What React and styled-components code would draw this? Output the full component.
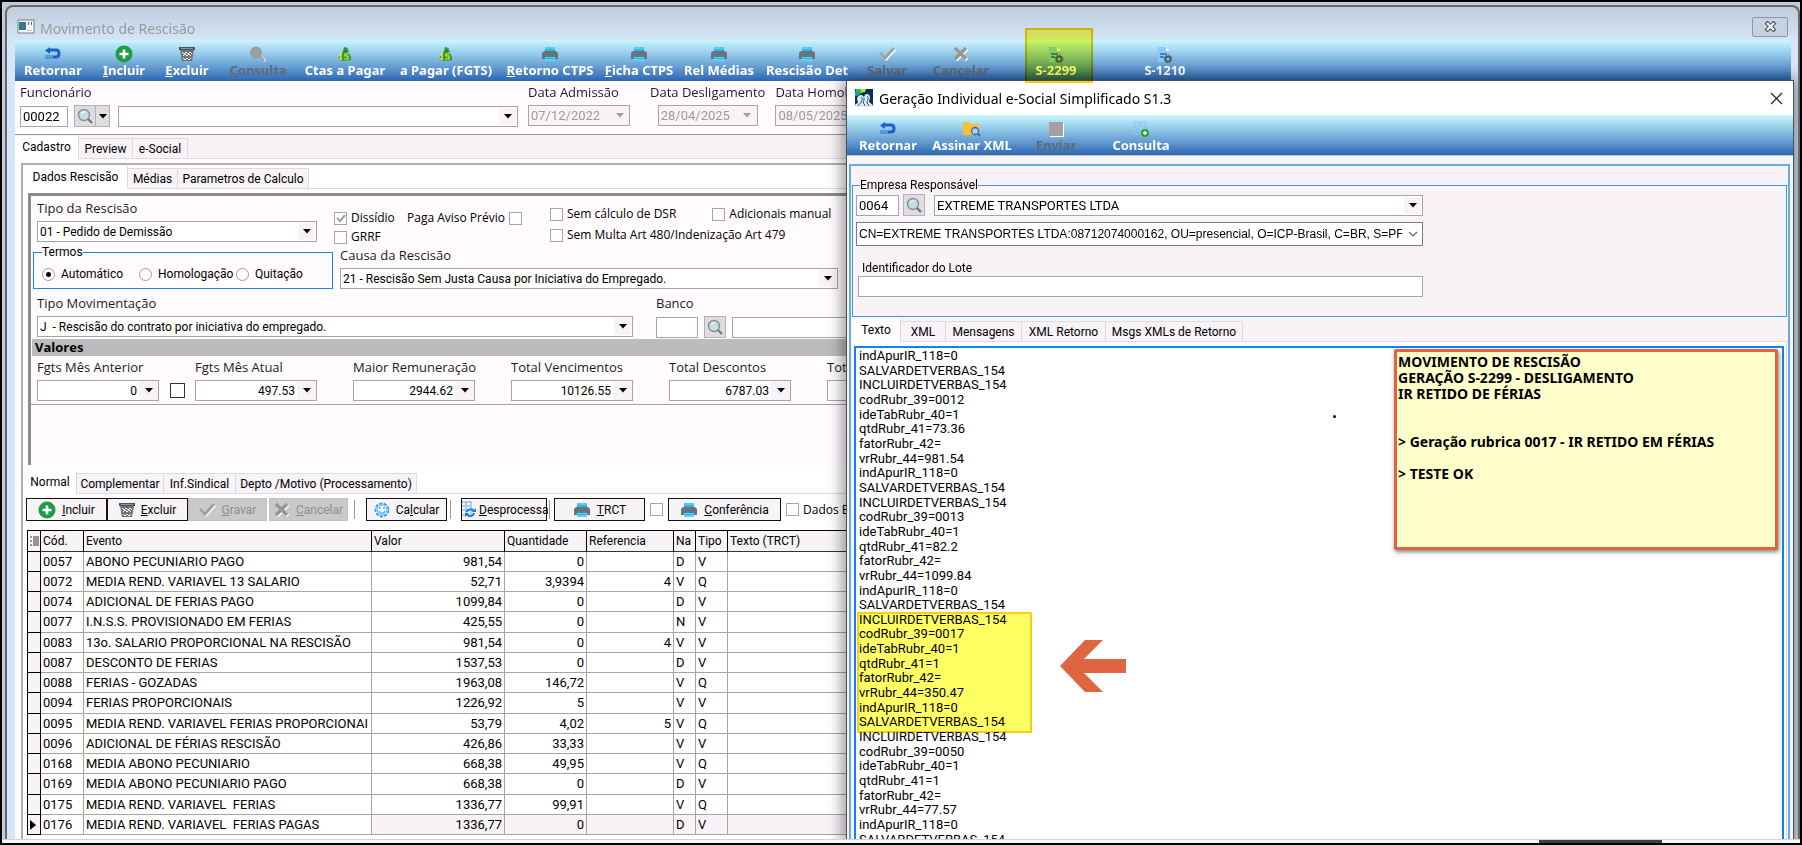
import React, { useId } from 'react';
import styled, { createGlobalStyle } from 'styled-components';

const gridFont = 'Roboto, "Liberation Sans", sans-serif';
const labelFont = '"Open Sans", "Noto Sans", sans-serif';
const boldFont = '"Noto Sans", "Open Sans", sans-serif';

const eventos = [
  ['0057', 'ABONO PECUNIARIO PAGO', '981,54', '0', '', 'D', 'V'],
  ['0072', 'MEDIA REND. VARIAVEL 13 SALARIO', '52,71', '3,9394', '4', 'V', 'Q'],
  ['0074', 'ADICIONAL DE FERIAS PAGO', '1099,84', '0', '', 'D', 'V'],
  ['0077', 'I.N.S.S. PROVISIONADO EM FERIAS', '425,55', '0', '', 'N', 'V'],
  ['0083', '13o. SALARIO PROPORCIONAL NA RESCISÃO', '981,54', '0', '4', 'V', 'V'],
  ['0087', 'DESCONTO DE FERIAS', '1537,53', '0', '', 'D', 'V'],
  ['0088', 'FERIAS - GOZADAS', '1963,08', '146,72', '', 'V', 'Q'],
  ['0094', 'FERIAS PROPORCIONAIS', '1226,92', '5', '', 'V', 'V'],
  ['0095', 'MEDIA REND. VARIAVEL FERIAS PROPORCIONAI', '53,79', '4,02', '5', 'V', 'Q'],
  ['0096', 'ADICIONAL DE FÉRIAS RESCISÃO', '426,86', '33,33', '', 'V', 'V'],
  ['0168', 'MEDIA ABONO PECUNIARIO', '668,38', '49,95', '', 'V', 'Q'],
  ['0169', 'MEDIA ABONO PECUNIARIO PAGO', '668,38', '0', '', 'D', 'V'],
  ['0175', 'MEDIA REND. VARIAVEL  FERIAS', '1336,77', '99,91', '', 'V', 'Q'],
  ['0176', 'MEDIA REND. VARIAVEL  FERIAS PAGAS', '1336,77', '0', '', 'D', 'V'],
];

const rubrica = (cod, qtd, valor) => [
  'INCLUIRDETVERBAS_154',
  `codRubr_39=${cod}`,
  'ideTabRubr_40=1',
  `qtdRubr_41=${qtd}`,
  'fatorRubr_42=',
  `vrRubr_44=${valor}`,
  'indApurIR_118=0',
  'SALVARDETVERBAS_154',
];

const loteTexto = [
  'indApurIR_118=0',
  'SALVARDETVERBAS_154',
  ...rubrica('0012', '73.36', '981.54'),
  ...rubrica('0013', '82.2', '1099.84'),
  ...rubrica('0017', '1', '350.47'),
  ...rubrica('0050', '1', '77.57'),
].join('\n');

const observacao = `MOVIMENTO DE RESCISÃO
GERAÇÃO S-2299 - DESLIGAMENTO
IR RETIDO DE FÉRIAS


> Geração rubrica 0017 - IR RETIDO EM FÉRIAS

> TESTE OK`;

/* ---------- icons ---------- */

const ReturnIcon = () => (
  <svg width="18" height="16" viewBox="0 0 18 16">
    <path d="M5 4h7c4 0 4 7 0 7H9" fill="none" stroke="#1464c8" strokeWidth="3" />
    <path d="M1 4.500L6 1v7z" fill="#1464c8" />
    <path d="M2 9v4M4 9v4M6 9v4M8 9v4" stroke="#2a6fd0" strokeWidth="1" />
  </svg>
);

const AddIcon = () => (
  <svg width="18" height="18" viewBox="0 0 18 18">
    <circle cx="9" cy="9" r="8.500" fill="#1f9a45" />
    <path d="M9 4.500v9M4.500 9h9" stroke="#fff" strokeWidth="2.600" />
  </svg>
);

const TrashIcon = () => (
  <svg width="16" height="16" viewBox="0 0 16 16">
    <path d="M0 1h16v3H0z" fill="#4c5257" />
    <path d="M2 2h12v1H2z" fill="#8d959a" />
    <path d="M1 4h14l-2 11H3z" fill="#6d757b" />
    <path d="M3 6l2 2 2-2 2 2 2-2 2 2M4 10l2-2 2 2 2-2 2 2M4 12l2 2 2-2 2 2 2-2" fill="none" stroke="#f0f4f6" strokeWidth="1" />
  </svg>
);

const BlurredLensIcon = () => (
  <svg width="18" height="17" viewBox="0 0 18 17">
    <path d="M11 11l5 4" stroke="#fff" strokeWidth="3" />
    <circle cx="7" cy="6.500" r="6" fill="#9b9ea3" />
    <path d="M9 9l6 6" stroke="#9b9ea3" strokeWidth="3" />
  </svg>
);

const MoneyIcon = () => (
  <svg width="16" height="16" viewBox="0 0 16 16">
    <path d="M7 1l4 1-1 4c3 2 5 5 4 8-1 1-10 1-12 0-1-3 1-6 4-8z" fill="#2f9b3a" />
    <path d="M6 5h6" stroke="#186a22" strokeWidth="1" />
    <path d="M2 9l2-1v5M2 13h3" stroke="#f1e33b" strokeWidth="1.500" fill="none" />
    <path d="M11 8H8v2h3v3H7" stroke="#f1e33b" strokeWidth="1.200" fill="none" />
  </svg>
);

const PrinterIcon = () => (
  <svg width="18" height="14" viewBox="0 0 18 14">
    <path d="M4 0h10v5H4z" fill="#52cdf2" />
    <path d="M3 4h12l2 2v6H1V6z" fill="#667380" />
    <path d="M4 2h10v2H4z" fill="#37b4e0" />
    <path d="M4 10h10v4H4z" fill="#49dcfa" />
    <path d="M5 11h8v1H5z" fill="#2fa9d8" />
  </svg>
);

const CheckIcon = () => (
  <svg width="17" height="14" viewBox="0 0 17 14">
    <path d="M2 7l5 5 9-10" fill="none" stroke="#fff" strokeWidth="3" />
    <path d="M1 6l5 5 9-10" fill="none" stroke="#a2a0a3" strokeWidth="3" />
  </svg>
);

const CrossIcon = () => (
  <svg width="16" height="16" viewBox="0 0 16 16">
    <path d="M3 3l11 11M14 3L3 14" stroke="#fff" strokeWidth="3.500" />
    <path d="M2 2l11 11M13 2L2 13" stroke="#979598" strokeWidth="3.500" />
  </svg>
);

const DocGearIcon = () => (
  <svg width="16" height="17" viewBox="0 0 16 17">
    <path d="M1 1h8l4 4v11H1z" fill="#8cc6fb" />
    <path d="M9 1l4 4H9z" fill="#f2f8ff" />
    <path d="M3 8h7M3 11h4" stroke="#1a72c4" strokeWidth="1.500" />
    <circle cx="11" cy="13" r="2.500" fill="none" stroke="#4c5a66" strokeWidth="2" />
    <circle cx="11" cy="13" r="4" fill="none" stroke="#4c5a66" strokeWidth="1" strokeDasharray="1.500 1.600" />
  </svg>
);

const FolderSearchIcon = () => (
  <svg width="18" height="16" viewBox="0 0 18 16">
    <path d="M0 1h6l2 2h8v11H0z" fill="#fbc02d" />
    <circle cx="12" cy="10" r="3.500" fill="#9fd3f7" stroke="#2e6ea6" strokeWidth="1.300" />
    <path d="M14.500 12.500L17 15" stroke="#2e5c86" strokeWidth="1.600" />
  </svg>
);

const StopIcon = () => (
  <svg width="15" height="15" viewBox="0 0 15 15">
    <path d="M1 1h14v14H1z" fill="#fff" />
    <path d="M0 0h14v14H0z" fill="#a3a1a5" />
  </svg>
);

const GridAddIcon = () => (
  <svg width="18" height="16" viewBox="0 0 18 16">
    <path d="M2 1h5v5H2zM9 1h5v5H9zM2 8h5v5H2z" fill="none" stroke="#86c8fa" strokeWidth="1.200" />
    <circle cx="13" cy="12" r="4" fill="#3c9b41" />
    <path d="M13 10v4M11 12h4" stroke="#fff" strokeWidth="1.300" />
  </svg>
);

const LensIcon = () => (
  <svg width="17" height="17" viewBox="0 0 17 17">
    <circle cx="7" cy="7" r="5.500" fill="#c9dbe2" stroke="#7f9099" strokeWidth="1.400" />
    <path d="M4 6c1-2 3-2 4-2" fill="none" stroke="#fff" strokeWidth="1" />
    <path d="M11 11l4 4" stroke="#6b7a82" strokeWidth="2.400" />
  </svg>
);

const FaceGearIcon = () => (
  <svg width="16" height="16" viewBox="0 0 16 16">
    <circle cx="8" cy="8" r="6.500" fill="none" stroke="#2f9be8" strokeWidth="1.800" strokeDasharray="3.200 1.300" />
    <circle cx="8" cy="8" r="5" fill="#eef7fd" stroke="#58b2ef" strokeWidth="1" />
    <path d="M6 5v2M10 5v2M5 9c1 3 5 3 6 0" fill="none" stroke="#2f9be8" strokeWidth="1.200" />
  </svg>
);

const TableRefreshIcon = () => (
  <svg width="14" height="17" viewBox="0 0 14 17">
    <path d="M0 1h9v13H0M0 5h9M0 9h9M4 1v13" fill="none" stroke="#8fc5f2" strokeWidth="1.500" />
    <path d="M5 11c0-3 6-4 7 0M12 12c-1 4-6 4-7 1" fill="none" stroke="#1f7fd6" strokeWidth="2" />
    <path d="M10 11h4V7zM7 12H3v4z" fill="#1f7fd6" />
  </svg>
);

const FormIcon = () => (
  <svg width="18" height="15" viewBox="0 0 18 15">
    <path d="M1 1h16v13H1z" fill="#fbfbfb" stroke="#6e7d8c" strokeWidth="1" />
    <path d="M2 3h6v8H2z" fill="#2f7d78" />
    <path d="M6 3h3v8H6z" fill="#3f6fb0" />
    <path d="M11 3h1v3h-1zM14 3h1v3h-1z" fill="#59636c" />
    <path d="M10 11h5v1h-5z" fill="#b8bec4" />
  </svg>
);

const PeopleIcon = () => (
  <svg width="18" height="18" viewBox="0 0 18 18">
    <path d="M0 0h18v18H0z" fill="#0d2f4e" />
    <path d="M1 0h7l1 3-4 2-3 2-2-1z" fill="#37c13c" />
    <path d="M6 0h5l-1 3H6z" fill="#b8e04a" />
    <path d="M0 3l4-1v2L0 8z" fill="#1b8fe0" />
    <path d="M0 17c0-3 3-2 3-4-2-4 0-7 3-7 2 0 3 2 3 3 0-2 1-4 3-4 3 0 4 4 2 7 0 2 3 2 4 5v1H0z" fill="#dfecf5" />
    <path d="M9 9c0 2 0 3-1 4 0 2 2 2 2 4M6 8c2 1 1 3 0 5 0 1-2 2-3 4M12 7c2 2 1 4 0 6 0 2 2 2 2 4" fill="none" stroke="#1d4a70" strokeWidth="1" />
  </svg>
);

const CaretIcon = ({ color = '#000' }) => (
  <svg width="8" height="5" viewBox="0 0 8 5">
    <path d="M0 0h8L4 4.500z" fill={color} />
  </svg>
);

const ChevronIcon = () => (
  <svg width="10" height="6" viewBox="0 0 10 6">
    <path d="M1 1l4 4 4-4" fill="none" stroke="#666" strokeWidth="1.200" />
  </svg>
);

const RowListIcon = () => (
  <svg width="9" height="11" viewBox="0 0 9 11">
    <path d="M3 1h6M3 3h6M3 5h6M3 7h6M3 9h6M0 1h2M0 5h2M0 9h2" stroke="#333" strokeWidth="1" />
  </svg>
);

const CurrentRowIcon = () => (
  <svg width="7" height="10" viewBox="0 0 7 10">
    <path d="M0 0l6 5-6 5z" fill="#000" />
  </svg>
);

/* ---------- parts ---------- */

// first letter (or the one at `at`) underlined as keyboard shortcut
const Hot = ({ text, at = 0 }) => (
  <span>
    {text.slice(0, at)}
    <u>{text[at]}</u>
    {text.slice(at + 1)}
  </span>
);

const ToolButton = ({ width, icon: Icon, disabled, children }) => (
  <StyledToolButton $width={width} disabled={disabled} type="button">
    <i><Icon /></i>
    <span>{children}</span>
  </StyledToolButton>
);

const Combo = ({ id, label, width, value, chevron, caps }) => (
  <ComboBox $width={width} $chevron={chevron} $caps={caps}>
    <select id={id} aria-label={label} defaultValue={value}>
      <option value={value}>{value}</option>
    </select>
    <ComboArrow $plain={chevron}>{chevron ? <ChevronIcon /> : <CaretIcon />}</ComboArrow>
  </ComboBox>
);

const Field = ({ label, children, align }) => {
  const id = useId();
  return (
    <StyledField $align={align}>
      <Label htmlFor={id}>{label}</Label>
      {children(id)}
    </StyledField>
  );
};

const DropInput = ({ id, width, value, disabled, right }) => (
  <DropBox $width={width} $disabled={disabled} $right={right}>
    <input id={id} defaultValue={value} disabled={disabled} />
    <DropButton type="button" aria-label="Abrir" disabled={disabled}>
      <CaretIcon color={disabled ? '#a0a0a0' : '#000'} />
    </DropButton>
  </DropBox>
);

const Check = ({ label, before, ...rest }) => (
  <CheckLabel>
    {before && label}
    <CheckBox type="checkbox" {...rest} />
    {!before && label}
  </CheckLabel>
);

const Tabs = ({ label, items }) => (
  <TabBar role="tablist" aria-label={label}>
    {items.map(([name, width], i) => (
      <Tab key={name} type="button" role="tab" aria-selected={i === 0} $width={width}>{name}</Tab>
    ))}
  </TabBar>
);

const valores = [
  ['Fgts Mês Anterior', '0'],
  ['Fgts Mês Atual', '497.53'],
  ['Maior Remuneração', '2944.62'],
  ['Total Vencimentos', '10126.55'],
  ['Total Descontos', '6787.03'],
  ['Total Líquido', ''],
];

const FuncionarioBar = () => (
  <FilterRow>
    <Field label="Funcionário">
      {id => (
        <Inline>
          <TextInput id={id} $width={48} defaultValue="00022" />
          <Split>
            <LensButton type="button" aria-label="Pesquisar funcionário"><LensIcon /></LensButton>
            <SplitCaret type="button" aria-label="Opções de pesquisa"><CaretIcon /></SplitCaret>
          </Split>
          <Combo label="Nome do funcionário" width={400} value="" />
        </Inline>
      )}
    </Field>
    <Field label="Data Admissão">{id => <DropInput id={id} width={102} value="07/12/2022" disabled />}</Field>
    <Field label="Data Desligamento" align="center">
      {id => <DropInput id={id} width={100} value="28/04/2025" disabled />}
    </Field>
    <Field label="Data Homologação">{id => <DropInput id={id} width={102} value="08/05/2025" disabled />}</Field>
  </FilterRow>
);

const RescisaoForm = () => (
  <Inset>
    <FormTop>
      <LeftColumn>
        <Field label="Tipo da Rescisão">
          {id => <Combo id={id} width={280} value="01 - Pedido de Demissão" />}
        </Field>
        <Termos>
          <legend>Termos</legend>
          <RadioLabel $width={97}><input type="radio" name="termos" defaultChecked />Automático</RadioLabel>
          <RadioLabel $width={97}><input type="radio" name="termos" />Homologação</RadioLabel>
          <RadioLabel><input type="radio" name="termos" />Quitação</RadioLabel>
        </Termos>
      </LeftColumn>
      <RightColumn>
        <Checks>
          <CheckColumn $width={73}>
            <Check label="Dissídio" defaultChecked disabled />
            <Check label="GRRF" />
          </CheckColumn>
          <CheckColumn $width={143}><Check label="Paga Aviso Prévio" before /></CheckColumn>
          <CheckColumn $tall>
            <CheckLine>
              <Check label="Sem cálculo de DSR" />
              <Check label="Adicionais manual" />
            </CheckLine>
            <Check label="Sem Multa Art 480/Indenização Art 479" />
          </CheckColumn>
        </Checks>
        <Field label="Causa da Rescisão">
          {id => <Combo id={id} width={498} value="21 - Rescisão Sem Justa Causa por Iniciativa do Empregado." />}
        </Field>
      </RightColumn>
    </FormTop>
    <MovimentoRow>
      <Field label="Tipo Movimentação">
        {id => <Combo id={id} width={596} value={'J\u00a0 - Rescisão do contrato por iniciativa do empregado.'} />}
      </Field>
      <Field label="Banco">
        {id => (
          <Inline>
            <TextInput id={id} $width={42} />
            <LensButton type="button" aria-label="Pesquisar banco"><LensIcon /></LensButton>
            <TextInput aria-label="Nome do banco" $width={300} />
          </Inline>
        )}
      </Field>
    </MovimentoRow>
    <SectionBar>Valores</SectionBar>
    <ValoresGrid>
      {valores.map(([label, value], i) => (
        <Field key={label} label={label}>
          {id => (
            <Inline $gap={11}>
              <DropInput id={id} width={122} value={value} right />
              {i === 0 && <BigCheck type="checkbox" aria-label="Alterar Fgts Mês Anterior" />}
            </Inline>
          )}
        </Field>
      ))}
    </ValoresGrid>
  </Inset>
);

const EventosToolbar = () => (
  <ActionRow>
    <ActionButton type="button" $width={81}><AddIcon /><Hot text="Incluir" /></ActionButton>
    <ActionButton type="button" $width={81}><TrashIcon /><Hot text="Excluir" /></ActionButton>
    <ActionButton type="button" $width={79} disabled><CheckIcon /><Hot text="Gravar" /></ActionButton>
    <ActionButton type="button" $width={79} disabled><CrossIcon /><Hot text="Cancelar" /></ActionButton>
    <Divider $before={4} $after={11} />
    <ActionButton type="button" $width={81}><FaceGearIcon /><Hot text="Calcular" at={2} /></ActionButton>
    <Divider $before={3} $after={10} />
    <ActionButton type="button" $width={86} $tight><TableRefreshIcon /><Hot text="Desprocessa" /></ActionButton>
    <Divider $before={2} $after={4} />
    <ActionButton type="button" $width={91}><PrinterIcon /><Hot text="TRCT" /></ActionButton>
    <BoxSlot><CheckBox type="checkbox" aria-label="TRCT" /></BoxSlot>
    <ActionButton type="button" $width={113}><PrinterIcon /><Hot text="Conferência" /></ActionButton>
    <BoxSlot><Check label="Dados Empresa" /></BoxSlot>
  </ActionRow>
);

const EventosTable = () => (
  <Grid>
    <colgroup>
      {[13, 43, 288, 133, 82, 87, 22, 32].map((w, i) => <col key={i} width={w} />)}
      <col />
    </colgroup>
    <thead>
      <tr>
        <th aria-label="Linha atual"><RowListIcon /></th>
        <th>Cód.</th>
        <th>Evento</th>
        <th>Valor</th>
        <th>Quantidade</th>
        <th>Referencia</th>
        <th>Na</th>
        <th>Tipo</th>
        <th>Texto (TRCT)</th>
      </tr>
    </thead>
    <tbody>
      {eventos.map(([cod, evento, valor, qtd, ref, na, tipo], i) => (
        <Row key={cod} $current={i === eventos.length - 1}>
          <td>{i === eventos.length - 1 && <CurrentRowIcon />}</td>
          <td>{cod}</td>
          <td>{evento}</td>
          <Num>{valor}</Num>
          <Num>{qtd}</Num>
          <Num>{ref}</Num>
          <td>{na}</td>
          <td>{tipo}</td>
          <td />
        </Row>
      ))}
    </tbody>
  </Grid>
);

const ESocialDialog = () => (
  <Dialog role="dialog" aria-label="Geração Individual e-Social Simplificado S1.3">
    <DialogTitle>
      <PeopleIcon />
      <span>Geração Individual e-Social Simplificado S1.3</span>
      <DialogClose type="button" aria-label="Fechar">
        <svg width="13" height="13" viewBox="0 0 13 13">
          <path d="M1 1l11 11M12 1L1 12" stroke="#222" strokeWidth="1.200" />
        </svg>
      </DialogClose>
    </DialogTitle>
    <ToolBar>
      <ToolButton width={82} icon={ReturnIcon}>Retornar</ToolButton>
      <ToolButton width={86} icon={FolderSearchIcon}>Assinar XML</ToolButton>
      <ToolButton width={82} icon={StopIcon} disabled>Enviar</ToolButton>
      <ToolButton width={88} icon={GridAddIcon}>Consulta</ToolButton>
    </ToolBar>
    <DialogBody>
      <Frame>
        <Empresa>
          <legend>Empresa Responsável</legend>
          <Inline $gap={4}>
            <TextInput aria-label="Código da empresa" $width={43} defaultValue="0064" />
            <LensButton type="button" aria-label="Pesquisar empresa"><LensIcon /></LensButton>
            <EmpresaNome>
              <Combo label="Empresa Responsável" width={489} value="EXTREME TRANSPORTES LTDA" caps />
            </EmpresaNome>
          </Inline>
          <Combo
            label="Certificado"
            width={567}
            value="CN=EXTREME TRANSPORTES LTDA:08712074000162, OU=presencial, O=ICP-Brasil, C=BR, S=PF"
            chevron
          />
          <Lote>
            <label htmlFor="lote">Identificador do Lote</label>
            <TextInput id="lote" $width={565} />
          </Lote>
        </Empresa>
        <Tabs
          label="Resultado"
          items={[['Texto', 49], ['XML', 45], ['Mensagens', 76], ['XML Retorno', 84], ['Msgs XMLs de Retorno', 137]]}
        />
        <MemoPage>
          <Memo aria-label="Texto" spellCheck={false} defaultValue={loteTexto} />
          <Marker $left={5} $top={270} $width={175} $height={121} />
          <Arrow width="67" height="53" viewBox="0 0 67 53">
            <path d="M0 26L25 0h18L24 19h42v14H24l19 19H25z" fill="#dd6641" />
          </Arrow>
          <Dot />
          <Note>{observacao}</Note>
        </MemoPage>
      </Frame>
    </DialogBody>
  </Dialog>
);

const App = () => (
  <Desktop>
    <GlobalStyle />
    <Window>
      <TitleBar>
        <FormIcon />
        <h1>Movimento de Rescisão</h1>
        <CloseButton type="button" aria-label="Fechar">
          <svg width="13" height="11" viewBox="0 0 13 11">
            <path d="M2 1l9 9M11 1L2 10" stroke="#59606e" strokeWidth="4.400" />
            <path d="M3 2l7 7M10 2L3 9" stroke="#fff" strokeWidth="2" />
          </svg>
        </CloseButton>
      </TitleBar>
      <Client>
        <ToolBar>
          <ToolButton width={76} icon={ReturnIcon}>Retornar</ToolButton>
          <ToolButton width={66} icon={AddIcon}><Hot text="Incluir" /></ToolButton>
          <ToolButton width={60} icon={TrashIcon}><Hot text="Excluir" /></ToolButton>
          <ToolButton width={82} icon={BlurredLensIcon} disabled><Hot text="Consulta" /></ToolButton>
          <ToolButton width={92} icon={MoneyIcon}>Ctas a Pagar</ToolButton>
          <ToolButton width={110} icon={MoneyIcon}>a Pagar (FGTS)</ToolButton>
          <ToolButton width={98} icon={PrinterIcon}><Hot text="Retorno CTPS" /></ToolButton>
          <ToolButton width={80} icon={PrinterIcon}><Hot text="Ficha CTPS" /></ToolButton>
          <ToolButton width={80} icon={PrinterIcon}>Rel Médias</ToolButton>
          <ToolButton width={96} icon={PrinterIcon}>Rescisão Det</ToolButton>
          <ToolButton width={64} icon={CheckIcon} disabled><Hot text="Salvar" /></ToolButton>
          <ToolButton width={84} icon={CrossIcon} disabled>Cancelar</ToolButton>
          <ToolButton width={106} icon={DocGearIcon}>S-2299</ToolButton>
          <ToolButton width={112} icon={DocGearIcon}>S-1210</ToolButton>
        </ToolBar>
        <FuncionarioBar />
        <Tabs label="Rescisão" items={[['Cadastro', 64], ['Preview', 54], ['e-Social', 55]]} />
        <Page>
          <Tabs label="Cadastro" items={[['Dados Rescisão', 104], ['Médias', 50], ['Parametros de Calculo', 131]]} />
          <RescisaoForm />
          <Tabs
            label="Eventos"
            items={[['Normal', 53], ['Complementar', 87], ['Inf.Sindical', 72], ['Depto /Motivo (Processamento)', 181]]}
          />
          <EventosToolbar />
          <EventosTable />
        </Page>
      </Client>
      <ESocialDialog />
      <Marker $left={1018} $top={21} $width={68} $height={55} />
    </Window>
    <StatusStrip><span /></StatusStrip>
  </Desktop>
);

export default App;

// 'css in js' styling
const GlobalStyle = createGlobalStyle`
  * {
    box-sizing: border-box;
  }
  body {
    margin: 0;
    background: #000;
    font: 12px ${gridFont};
    color: #000;
  }
  button, input, select, textarea {
    font: inherit;
    color: inherit;
    margin: 0;
  }
  svg {
    display: block;
    flex: none;
  }
`;

const Desktop = styled.div`
  height: 100vh;
  display: flex;
  flex-direction: column;
  border: 2px solid #000;
  background: #c3cadb;
  overflow: hidden;
`;

const Window = styled.section`
  position: relative;
  isolation: isolate;
  flex: 1;
  min-height: 0;
  margin: 3px 0 0 3px;
  display: flex;
  flex-direction: column;
  border: 2px solid #68696d;
  border-bottom: 0;
  border-radius: 8px 8px 0 0;
  background: linear-gradient(#c0cddb, #d5e6f7 34px);
  overflow: hidden;
`;

const TitleBar = styled.header`
  flex: none;
  height: 33px;
  padding: 6px 10px 0;
  display: flex;
  align-items: center;
  gap: 5px;
  h1 {
    flex: 1;
    margin: 0;
    padding-top: 4px;
    font: 14px ${boldFont};
    color: #97999c;
  }
`;

const CloseButton = styled.button`
  width: 36px;
  height: 20px;
  padding: 0;
  display: flex;
  align-items: center;
  justify-content: center;
  border: 1px solid #8996b0;
  border-radius: 2px;
  background: #c4d2e4;
`;

const Client = styled.main`
  flex: 1;
  min-height: 0;
  margin: 0 7px 0 8px;
  display: flex;
  flex-direction: column;
  background: #fffbff;
  overflow: hidden;
`;

const ToolBar = styled.div`
  flex: none;
  height: 41px;
  display: flex;
  background: linear-gradient(#cbf6ff, #9bd0ec 30%, #659cd1 66%, #2c66b3);
  overflow: hidden;
`;

const StyledToolButton = styled.button`
  flex: none;
  width: ${props => props.$width}px;
  padding: 0;
  display: flex;
  flex-direction: column;
  align-items: center;
  border: 0;
  background: none;
  font: bold 13px/16px ${boldFont};
  white-space: nowrap;
  color: ${props => (props.disabled ? '#5f6a78' : '#fff')};
  i {
    height: 22px;
    padding-top: 6px;
    display: flex;
    align-items: center;
  }
`;

const FilterRow = styled.div`
  flex: none;
  height: 54px;
  padding: 3px 5px;
  display: flex;
  gap: 10px;
  border-bottom: 1px solid #9a989b;
  font-size: 13px;
  overflow: hidden;
`;

const StyledField = styled.div`
  flex: none;
  display: flex;
  flex-direction: column;
  align-items: ${props => props.$align || 'flex-start'};
  & + & {
    min-width: 112px;
  }
`;

const Label = styled.label`
  font: 13px/17px ${labelFont};
  height: 21px;
  white-space: nowrap;
  color: #1d1b22;
`;

const Inline = styled.div`
  display: flex;
  align-items: center;
  gap: ${props => props.$gap || 6}px;
`;

const TextInput = styled.input`
  flex: none;
  width: ${props => props.$width}px;
  height: 21px;
  padding: 0 2px;
  border: 1px solid #a6a4a8;
  background: #fff;
`;

const Split = styled.div`
  display: flex;
  margin-right: 2px;
`;

const LensButton = styled.button`
  flex: none;
  width: 22px;
  height: 22px;
  padding: 0;
  display: flex;
  align-items: center;
  justify-content: center;
  border: 1px solid #b3b1b5;
  background: #dfdde0;
`;

const SplitCaret = styled(LensButton)`
  width: 14px;
  border-left: 0;
`;

const ComboBox = styled.div`
  position: relative;
  flex: none;
  width: ${props => props.$width}px;
  height: ${props => (props.$chevron ? 24 : 21)}px;
  border: 1px solid ${props => (props.$chevron ? '#7b7a7d' : '#a6a4a8')};
  background: #fff;
  select {
    width: 100%;
    height: 100%;
    padding: 0 20px 0 2px;
    border: 0;
    appearance: none;
    background: none;
    font-family: ${props => (props.$chevron ? '"Liberation Sans", sans-serif' : 'inherit')};
    font-size: ${props => (props.$caps ? 13 : 12)}px;
  }
`;

const ComboArrow = styled.span`
  position: absolute;
  top: 1px;
  right: 1px;
  bottom: 1px;
  width: 17px;
  display: flex;
  align-items: center;
  justify-content: center;
  background: ${props => (props.$plain ? '#fff' : '#f7f3f7')};
  pointer-events: none;
`;

const DropBox = styled.div`
  flex: none;
  width: ${props => props.$width}px;
  height: 21px;
  display: flex;
  border: 1px solid #a6a4a8;
  background: ${props => (props.$disabled ? '#f7f3f7' : '#fff')};
  color: ${props => (props.$disabled ? '#9c9a9d' : '#000')};
  input {
    flex: 1;
    min-width: 0;
    padding: 0 2px;
    border: 0;
    background: none;
    text-align: ${props => (props.$right ? 'right' : 'left')};
  }
`;

const DropButton = styled.button`
  flex: none;
  width: 19px;
  padding: 0;
  display: flex;
  align-items: center;
  justify-content: center;
  border: 0;
  background: #f7f3f7;
`;

const TabBar = styled.div`
  flex: none;
  height: 24px;
  display: flex;
  align-items: flex-end;
  border-bottom: 1px solid #dedadf;
  background: #f7f3f7;
`;

const Tab = styled.button`
  flex: none;
  width: ${props => props.$width}px;
  height: 20px;
  padding: 0;
  border: 1px solid #dedadf;
  border-width: 1px 1px 0 0;
  background: #f7f3f7;
  white-space: nowrap;
  &[aria-selected='true'] {
    height: 23px;
    padding-bottom: 2px;
    margin-bottom: -1px;
    border-width: 0 1px 0 0;
    background: #fff;
  }
`;

const Page = styled.div`
  flex: 1;
  min-height: 0;
  margin: 4px 0 0 6px;
  padding-left: 1px;
  display: flex;
  flex-direction: column;
  border: 1px solid #b0aeb2;
  border-width: 2px 0 0 2px;
  background: #fff;
  & > ${TabBar} {
    background: #fff;
  }
`;

const Inset = styled.div`
  flex: none;
  height: 272px;
  margin: 4px 0 5px 4px;
  border: solid #8c8a8d;
  border-width: 3px 0 0 3px;
  background: #fffbff;
  overflow: hidden;
`;

const FormTop = styled.div`
  display: flex;
  height: 95px;
`;

const LeftColumn = styled.div`
  width: 303px;
  padding: 4px 0 0 2px;
  & > ${StyledField} {
    padding-left: 4px;
  }
`;

const Termos = styled.fieldset`
  width: 300px;
  height: 45px;
  margin: 2px 0 0;
  padding: 6px 8px 0;
  display: flex;
  border: 1px solid #1b86e0;
  legend {
    padding: 0;
    line-height: 16px;
  }
`;

const RadioLabel = styled.label`
  flex: none;
  width: ${props => (props.$width ? `${props.$width}px` : 'auto')};
  height: 16px;
  display: flex;
  align-items: center;
  gap: 6px;
  white-space: nowrap;
  input {
    flex: none;
    width: 13px;
    height: 13px;
    appearance: none;
    border: 1px solid #9c9a9d;
    border-radius: 50%;
    background: #fff;
  }
  input:checked {
    background: radial-gradient(#000 2px, #fff 3px);
  }
`;

const RightColumn = styled.div`
  flex: 1;
  & > ${StyledField} {
    padding-left: 6px;
  }
`;

const Checks = styled.div`
  height: 51px;
  padding-top: 10px;
  display: flex;
`;

const CheckColumn = styled.div`
  flex: none;
  width: ${props => (props.$width ? `${props.$width}px` : 'auto')};
  padding-top: ${props => (props.$tall ? 0 : 4)}px;
  display: flex;
  flex-direction: column;
  gap: ${props => (props.$tall ? 5 : 3)}px;
`;

const CheckLine = styled.div`
  display: flex;
  gap: 36px;
`;

const CheckLabel = styled.label`
  height: 16px;
  display: flex;
  align-items: center;
  gap: 4px;
  font: 12px/16px ${labelFont};
  white-space: nowrap;
`;

const CheckBox = styled.input`
  flex: none;
  width: 13px;
  height: 13px;
  appearance: none;
  border: 1px solid #a6a4a8;
  background: #fff;
  &:checked {
    background: #fff url("data:image/svg+xml,%3Csvg xmlns='http://www.w3.org/2000/svg' viewBox='0 0 11 11'%3E%3Cpath d='M2 5l3 3 5-6' fill='none' stroke='%23a0a0a0' stroke-width='2'/%3E%3C/svg%3E");
  }
`;

const MovimentoRow = styled.div`
  height: 48px;
  padding: 4px 0 0 6px;
  display: flex;
  gap: 23px;
`;

const SectionBar = styled.h2`
  height: 17px;
  margin: 0 0 0 1px;
  padding-left: 3px;
  background: #bcbcbc;
  font: bold 13px/17px ${labelFont};
`;

const ValoresGrid = styled.div`
  height: 49px;
  padding: 3px 0 0 6px;
  display: grid;
  grid-template-columns: repeat(6, 158px);
  border-bottom: 1px solid #a3a1a4;
`;

const BigCheck = styled(CheckBox)`
  width: 15px;
  height: 15px;
  border-color: #333;
`;

const ActionRow = styled.div`
  flex: none;
  height: 36px;
  padding: 4px 0 0 2px;
  display: flex;
  overflow: hidden;
`;

const ActionButton = styled.button`
  flex: none;
  width: ${props => props.$width}px;
  height: 23px;
  margin-right: ${props => (props.disabled ? 2 : 0)}px;
  padding: 0;
  display: flex;
  align-items: center;
  justify-content: ${props => (props.$tight ? 'flex-start' : 'center')};
  gap: ${props => (props.$tight ? 3 : 6)}px;
  border: ${props => (props.disabled ? '1px solid #c2c0c3' : '1px solid #111')};
  background: ${props => (props.disabled ? '#cac8cb' : '#f7f3f7')};
  color: ${props => (props.disabled ? '#8f8d90' : '#000')};
  white-space: nowrap;
`;

const Divider = styled.span`
  flex: none;
  width: 1px;
  height: 19px;
  margin: 2px ${props => props.$after}px 0 ${props => props.$before}px;
  background: #9c9a9d;
`;

const BoxSlot = styled.div`
  flex: none;
  height: 23px;
  padding: 0 5px;
  display: flex;
  align-items: center;
`;

const Grid = styled.table`
  flex: none;
  width: calc(100% - 3px);
  margin-left: 3px;
  table-layout: fixed;
  border-collapse: separate;
  border-spacing: 0;
  border-left: 1px solid #000;
  border-top: 1px solid #000;
  th, td {
    height: 20px;
    padding: 0 2px;
    border-right: 1px solid #a6a4a8;
    border-bottom: 1px solid #a6a4a8;
    font-size: 13px;
    font-weight: normal;
    line-height: 18px;
    text-align: left;
    white-space: pre;
    overflow: hidden;
  }
  th {
    height: 21px;
    font-size: 12px;
    border-right-color: #000;
    border-bottom-color: #333;
    background: #f7f3f7;
  }
  th:first-child, td:first-child {
    background: #f7f3f7;
    border-right-color: #000;
    border-bottom-color: #000;
  }
`;

const Row = styled.tr`
  background: #fff;
  &:nth-child(4n) td {
    height: 21px;
  }
  td:nth-child(n + 4) {
    background: ${props => (props.$current ? '#f7f3f7' : 'none')};
  }
`;

const Num = styled.td`
  && {
    text-align: right;
  }
`;

const Dialog = styled.section`
  position: absolute;
  top: 73px;
  left: 839px;
  right: 4px;
  bottom: 0;
  display: flex;
  flex-direction: column;
  border: 1px solid #4d4f55;
  border-bottom: 0;
  background: #f7f3f7;
  box-shadow: 0 2px 14px 4px rgba(0, 0, 0, 0.4);
  ${ToolBar} {
    height: 40px;
  }
`;

const DialogTitle = styled.header`
  flex: none;
  height: 34px;
  padding: 0 8px;
  display: flex;
  align-items: center;
  gap: 6px;
  background: #fff;
  font: 14px ${boldFont};
  span {
    flex: 1;
  }
`;

const DialogClose = styled.button`
  padding: 2px;
  border: 0;
  background: none;
`;

const DialogBody = styled.div`
  flex: 1;
  min-height: 0;
  padding: 8px 3px 0 2px;
  display: flex;
  border-top: 1px solid #c9c3cb;
`;

const Frame = styled.div`
  flex: 1;
  min-width: 0;
  display: flex;
  flex-direction: column;
  padding: 12px 1px 0 1px;
  border: 2px solid #62ace8;
  border-bottom: 0;
`;

const Empresa = styled.fieldset`
  flex: none;
  height: 139px;
  margin: 0 0 1px;
  padding: 1px 3px 0;
  display: flex;
  flex-direction: column;
  gap: 6px;
  border: 1px solid #3f97de;
  legend {
    margin-left: 4px;
    padding: 0;
    line-height: 15px;
  }
  input {
    font-size: 13px;
  }
`;

const EmpresaNome = styled.div`
  margin-left: 5px;
`;

const Lote = styled.div`
  margin-top: 9px;
  padding-left: 2px;
  display: flex;
  flex-direction: column;
  label {
    padding-left: 4px;
    line-height: 15px;
  }
`;

const MemoPage = styled.div`
  position: relative;
  flex: 1;
  min-height: 0;
  padding: 4px 2px 0;
  border-right: 1px solid #dedadf;
  background: #fff;
`;

const Memo = styled.textarea`
  display: block;
  width: 100%;
  height: 100%;
  padding: 1px 3px;
  border: 2px solid #1280f5;
  border-bottom: 0;
  outline: 0;
  resize: none;
  font-size: 13px;
  line-height: 1.128;
  overflow: hidden;
  background: #fff;
`;

const Marker = styled.div`
  position: absolute;
  left: ${props => props.$left}px;
  top: ${props => props.$top}px;
  width: ${props => props.$width}px;
  height: ${props => props.$height}px;
  border: 2px solid #ffcc10;
  background: #ffff64;
  mix-blend-mode: multiply;
  pointer-events: none;
`;

const Arrow = styled.svg`
  position: absolute;
  left: 208px;
  top: 298px;
`;

const Dot = styled.span`
  position: absolute;
  left: 481px;
  top: 73px;
  width: 3px;
  height: 3px;
  border-radius: 50%;
  background: #000;
`;

const Note = styled.aside`
  position: absolute;
  top: 7px;
  right: 8px;
  width: 384px;
  height: 201px;
  padding: 2px 1px;
  border: 3px solid #dd6641;
  border-radius: 2px;
  background: #ffffcb;
  box-shadow: 1px 2px 4px rgba(0, 0, 0, 0.5);
  font: bold 14px/16px ${boldFont};
  white-space: pre-wrap;
`;

const StatusStrip = styled.footer`
  flex: none;
  height: 4px;
  display: flex;
  border-top: 1px solid #d5d2d6;
  background: #f7f3f7;
  span {
    width: 123px;
    margin-left: auto;
    margin-right: 138px;
    background: #3c4043;
  }
`;
